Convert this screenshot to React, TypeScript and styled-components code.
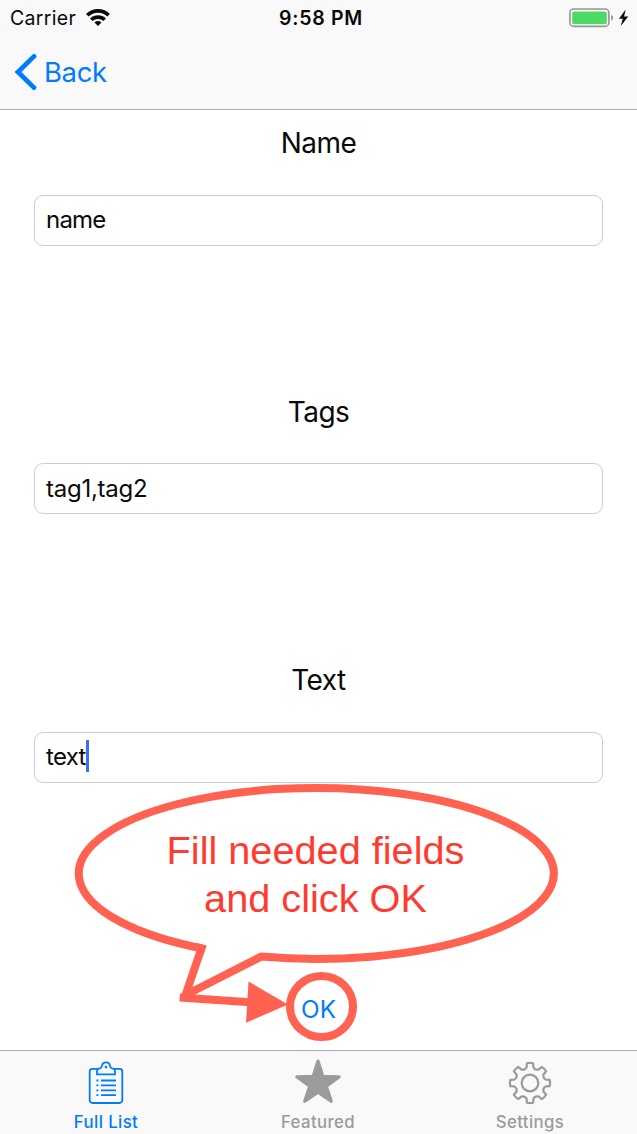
import React from "react";
import styled, { createGlobalStyle } from "styled-components";

const BLUE = "#007aff";
const CORAL = "#ff6250";
const GREY = "#9b9b9b";

const GlobalStyle = createGlobalStyle`
  *, *::before, *::after { box-sizing: border-box; }
  body { margin: 0; background: #fff; }
`;

const Screen = styled.div`
  position: relative;
  display: flex;
  flex-direction: column;
  width: 637px;
  height: 1134px;
  overflow: hidden;
  background: #fff;
  color: #0a0a0a;
  font-family: Inter, "Liberation Sans", sans-serif;
`;

const Header = styled.header`
  display: flex;
  flex-direction: column;
  height: 110px;
  background: #f9f9f9;
  border-bottom: 1px solid #adadad;
`;

const StatusBar = styled.div`
  display: grid;
  grid-template-columns: 1fr auto 1fr;
  align-items: center;
  height: 36px;
  padding: 0 8px 0 10px;
`;

const CarrierGroup = styled.div`
  display: flex;
  align-items: center;
  gap: 10px;
`;

const Carrier = styled.span`
  font-size: 19.5px;
  line-height: 36px;
  letter-spacing: 0.3px;
`;

const Clock = styled.span`
  padding-left: 3px;
  font-size: 19.5px;
  font-weight: 600;
  line-height: 36px;
  letter-spacing: 0.7px;
`;

const PowerGroup = styled.div`
  display: flex;
  justify-content: flex-end;
  align-items: center;
`;

const BackButton = styled.button`
  display: flex;
  align-items: center;
  align-self: flex-start;
  gap: 7px;
  height: 71px;
  padding: 0 0 0 14px;
  border: 0;
  background: none;
  color: ${BLUE};
  font: 400 27.5px/36px Inter, sans-serif;
  letter-spacing: -0.4px;
`;

const Form = styled.main`
  display: flex;
  flex-direction: column;
  flex: 1;
  padding: 0 34px;
`;

const Field = styled.label<{ $height: number }>`
  display: flex;
  flex-direction: column;
  height: ${(p) => p.$height}px;
  padding-top: 15px;
`;

const FieldTitle = styled.span<{ $drop?: number }>`
  height: 36px;
  padding-top: ${(p) => p.$drop ?? 0}px;
  font-size: 28px;
  line-height: 36px;
  letter-spacing: -0.5px;
  text-align: center;
`;

const FieldBox = styled.div<{ $tracking: number; $drop?: number }>`
  display: flex;
  align-items: center;
  height: 51px;
  margin-top: 34px;
  padding: ${(p) => (p.$drop ?? 0) * 2}px 11px 2px;
  border: 1px solid #cdcdcd;
  border-radius: 9px;
  font-size: 24px;
  letter-spacing: ${(p) => p.$tracking}px;
`;

const Caret = styled.span`
  width: 3px;
  height: 32px;
  margin-bottom: 2px;
  background: #426bf2;
`;

const OkButton = styled.button`
  align-self: center;
  margin-top: 210px;
  padding: 0;
  border: 0;
  background: none;
  color: ${BLUE};
  font: 400 24.3px/32px Inter, sans-serif;
`;

const TabBar = styled.nav`
  display: grid;
  grid-template-columns: repeat(3, 1fr);
  height: 84px;
  padding-right: 1px;
  background: #f9f9f9;
  border-top: 1px solid #adadad;
`;

const Tab = styled.div<{ $active?: boolean }>`
  display: flex;
  flex-direction: column;
  align-items: center;
  padding-top: 8px;
  color: ${(p) => (p.$active ? BLUE : GREY)};
`;

const TabLabel = styled.span`
  margin-top: 6px;
  font-size: 16.8px;
  font-weight: 500;
  line-height: 22px;
  letter-spacing: 0.4px;
`;

const Annotation = styled.div`
  position: absolute;
  left: 70px;
  top: 780px;
  width: 495px;
  height: 265px;
  pointer-events: none;
`;

const AnnotationShape = styled.svg`
  position: absolute;
  inset: 0;
`;

const AnnotationText = styled.p`
  position: relative;
  margin: 0;
  padding: 46px 4px 0 0;
  color: #ff3b30;
  font: 400 39.7px/48px "Liberation Sans", sans-serif;
  text-align: center;
`;

const WifiIcon = () => (
  <svg width="24" height="18" viewBox="0 0 24 18" fill="none" stroke="#0a0a0a" strokeWidth="3.6">
    <path d="M1.3 6.3a15.2 15.2 0 0 1 21.4 0" />
    <path d="M5.3 10.8a9.6 9.6 0 0 1 13.4 0" />
    <path d="M12 17l-3.5-3.5a5 5 0 0 1 7 0z" fill="#0a0a0a" stroke="none" />
  </svg>
);

const BatteryIcon = () => (
  <svg width="60" height="20" viewBox="0 0 60 20">
    <rect x="0.9" y="1" width="39" height="17.4" rx="4" fill="#fff" stroke="#959595" strokeWidth="1.6" />
    <rect x="3.2" y="3.4" width="34.6" height="12.8" rx="1.8" fill="#4cd964" />
    <path d="M42.2 6.8c2.5.7 2.5 5.3 0 6z" fill="#959595" />
    <path d="M56.6 1.6L50 10.8h3.8L51.7 18l7.6-9.4h-4.2z" fill="#0a0a0a" />
  </svg>
);

const ChevronIcon = () => (
  <svg width="23" height="36" viewBox="0 0 23 36" fill="none" stroke={BLUE} strokeWidth="4.8">
    <path d="M20 2.4L4 18l16 15.6" strokeLinecap="round" />
  </svg>
);

const ClipboardIcon = () => (
  <svg width="46" height="46" viewBox="0 0 46 46" fill="none" stroke="currentColor" strokeWidth="1.8">
    <path d="M14.6 9.9H9.5a2.8 2.8 0 0 0-2.8 2.8v28.500a2.8 2.8 0 0 0 2.8 2.8h27a2.8 2.8 0 0 0 2.8-2.8V12.700a2.8 2.8 0 0 0-2.8-2.8h-5.1" />
    <path d="M14 15.400v-3.200c0-2 1-2.600 3-2.800 1.500-.2 1.700-1.200 2-2.800.8-4.200 7.200-4.200 8 0 .3 1.600.5 2.600 2 2.800 2 .2 3 .8 3 2.800v3.200z" />
    <circle cx="23" cy="8.1" r="1.3" fill="currentColor" stroke="none" />
    <path d="M18 21.500h15M18 26.400h15M18 31.300h15M18 36.200h15" />
    <path d="M13.4 21.500h2M13.4 26.400h2M13.4 31.300h2M13.4 36.200h2" />
  </svg>
);

const StarIcon = () => (
  <svg width="46" height="46" viewBox="0 0 46 46" fill="currentColor" stroke="currentColor" strokeWidth="3.4" strokeLinejoin="round">
    <path d="M23 2.2L27.8 17.4 44 17.9 31.2 27.2 36.2 42.2 23 33 9.8 42.2 14.8 27.2 2 17.9 18.2 17.4z" />
  </svg>
);

const gearPoint = (radius: number, degrees: number) => {
  const a = (degrees * Math.PI) / 180;
  return `${(23 + radius * Math.sin(a)).toFixed(2)} ${(24 - radius * Math.cos(a)).toFixed(2)}`;
};

const gearPath =
  Array.from({ length: 8 }, (_, i) => {
    const d = i * 45;
    return `${i === 0 ? "M" : "L"}${gearPoint(20, d - 9)}Q${gearPoint(20.4, d)} ${gearPoint(20, d + 9)}L${gearPoint(16.2, d + 12)}Q${gearPoint(13.5, d + 22.5)} ${gearPoint(16.2, d + 33)}`;
  }).join("") + "Z";

const GearIcon = () => (
  <svg width="46" height="46" viewBox="0 0 46 46" fill="none" stroke="currentColor" strokeWidth="2.2" strokeLinejoin="round">
    <path d={gearPath} />
    <circle cx="23" cy="24" r="8.3" />
  </svg>
);

const Callout = () => (
  <Annotation>
    <AnnotationShape width="495" height="265" viewBox="70 780 495 265" fill="none" stroke={CORAL} strokeWidth="8">
      <path d="M261 956.6A237.5 85.5 0 1 0 201.5 948.3L185.5 995z" strokeLinejoin="bevel" />
      <path d="M196 946.9L201.5 948.3 199.6 953.8" />
      <path d="M179.7 997.6L250 1002.2" />
      <path d="M248.5 981.5L288 1004.5 246 1022.8z" fill={CORAL} stroke="none" />
      <ellipse cx="321.5" cy="1006.5" rx="31.5" ry="30.6" />
    </AnnotationShape>
    <AnnotationText>
      Fill needed fields
      <br />
      and click OK
    </AnnotationText>
  </Annotation>
);

export default function App() {
  return (
    <Screen>
      <GlobalStyle />
      <Header>
        <StatusBar>
          <CarrierGroup>
            <Carrier>Carrier</Carrier>
            <WifiIcon />
          </CarrierGroup>
          <Clock>9:58 PM</Clock>
          <PowerGroup>
            <BatteryIcon />
          </PowerGroup>
        </StatusBar>
        <BackButton>
          <ChevronIcon />
          Back
        </BackButton>
      </Header>
      <Form>
        <Field $height={268}>
          <FieldTitle>Name</FieldTitle>
          <FieldBox $tracking={-0.8}>name</FieldBox>
        </Field>
        <Field $height={269}>
          <FieldTitle $drop={1}>Tags</FieldTitle>
          <FieldBox $tracking={-0.25} $drop={1}>tag1,tag2</FieldBox>
        </Field>
        <Field $height={136}>
          <FieldTitle>Text</FieldTitle>
          <FieldBox $tracking={-0.7}>
            text
            <Caret />
          </FieldBox>
        </Field>
        <OkButton>OK</OkButton>
      </Form>
      <TabBar>
        <Tab $active>
          <ClipboardIcon />
          <TabLabel>Full List</TabLabel>
        </Tab>
        <Tab>
          <StarIcon />
          <TabLabel>Featured</TabLabel>
        </Tab>
        <Tab>
          <GearIcon />
          <TabLabel>Settings</TabLabel>
        </Tab>
      </TabBar>
      <Callout />
    </Screen>
  );
}
